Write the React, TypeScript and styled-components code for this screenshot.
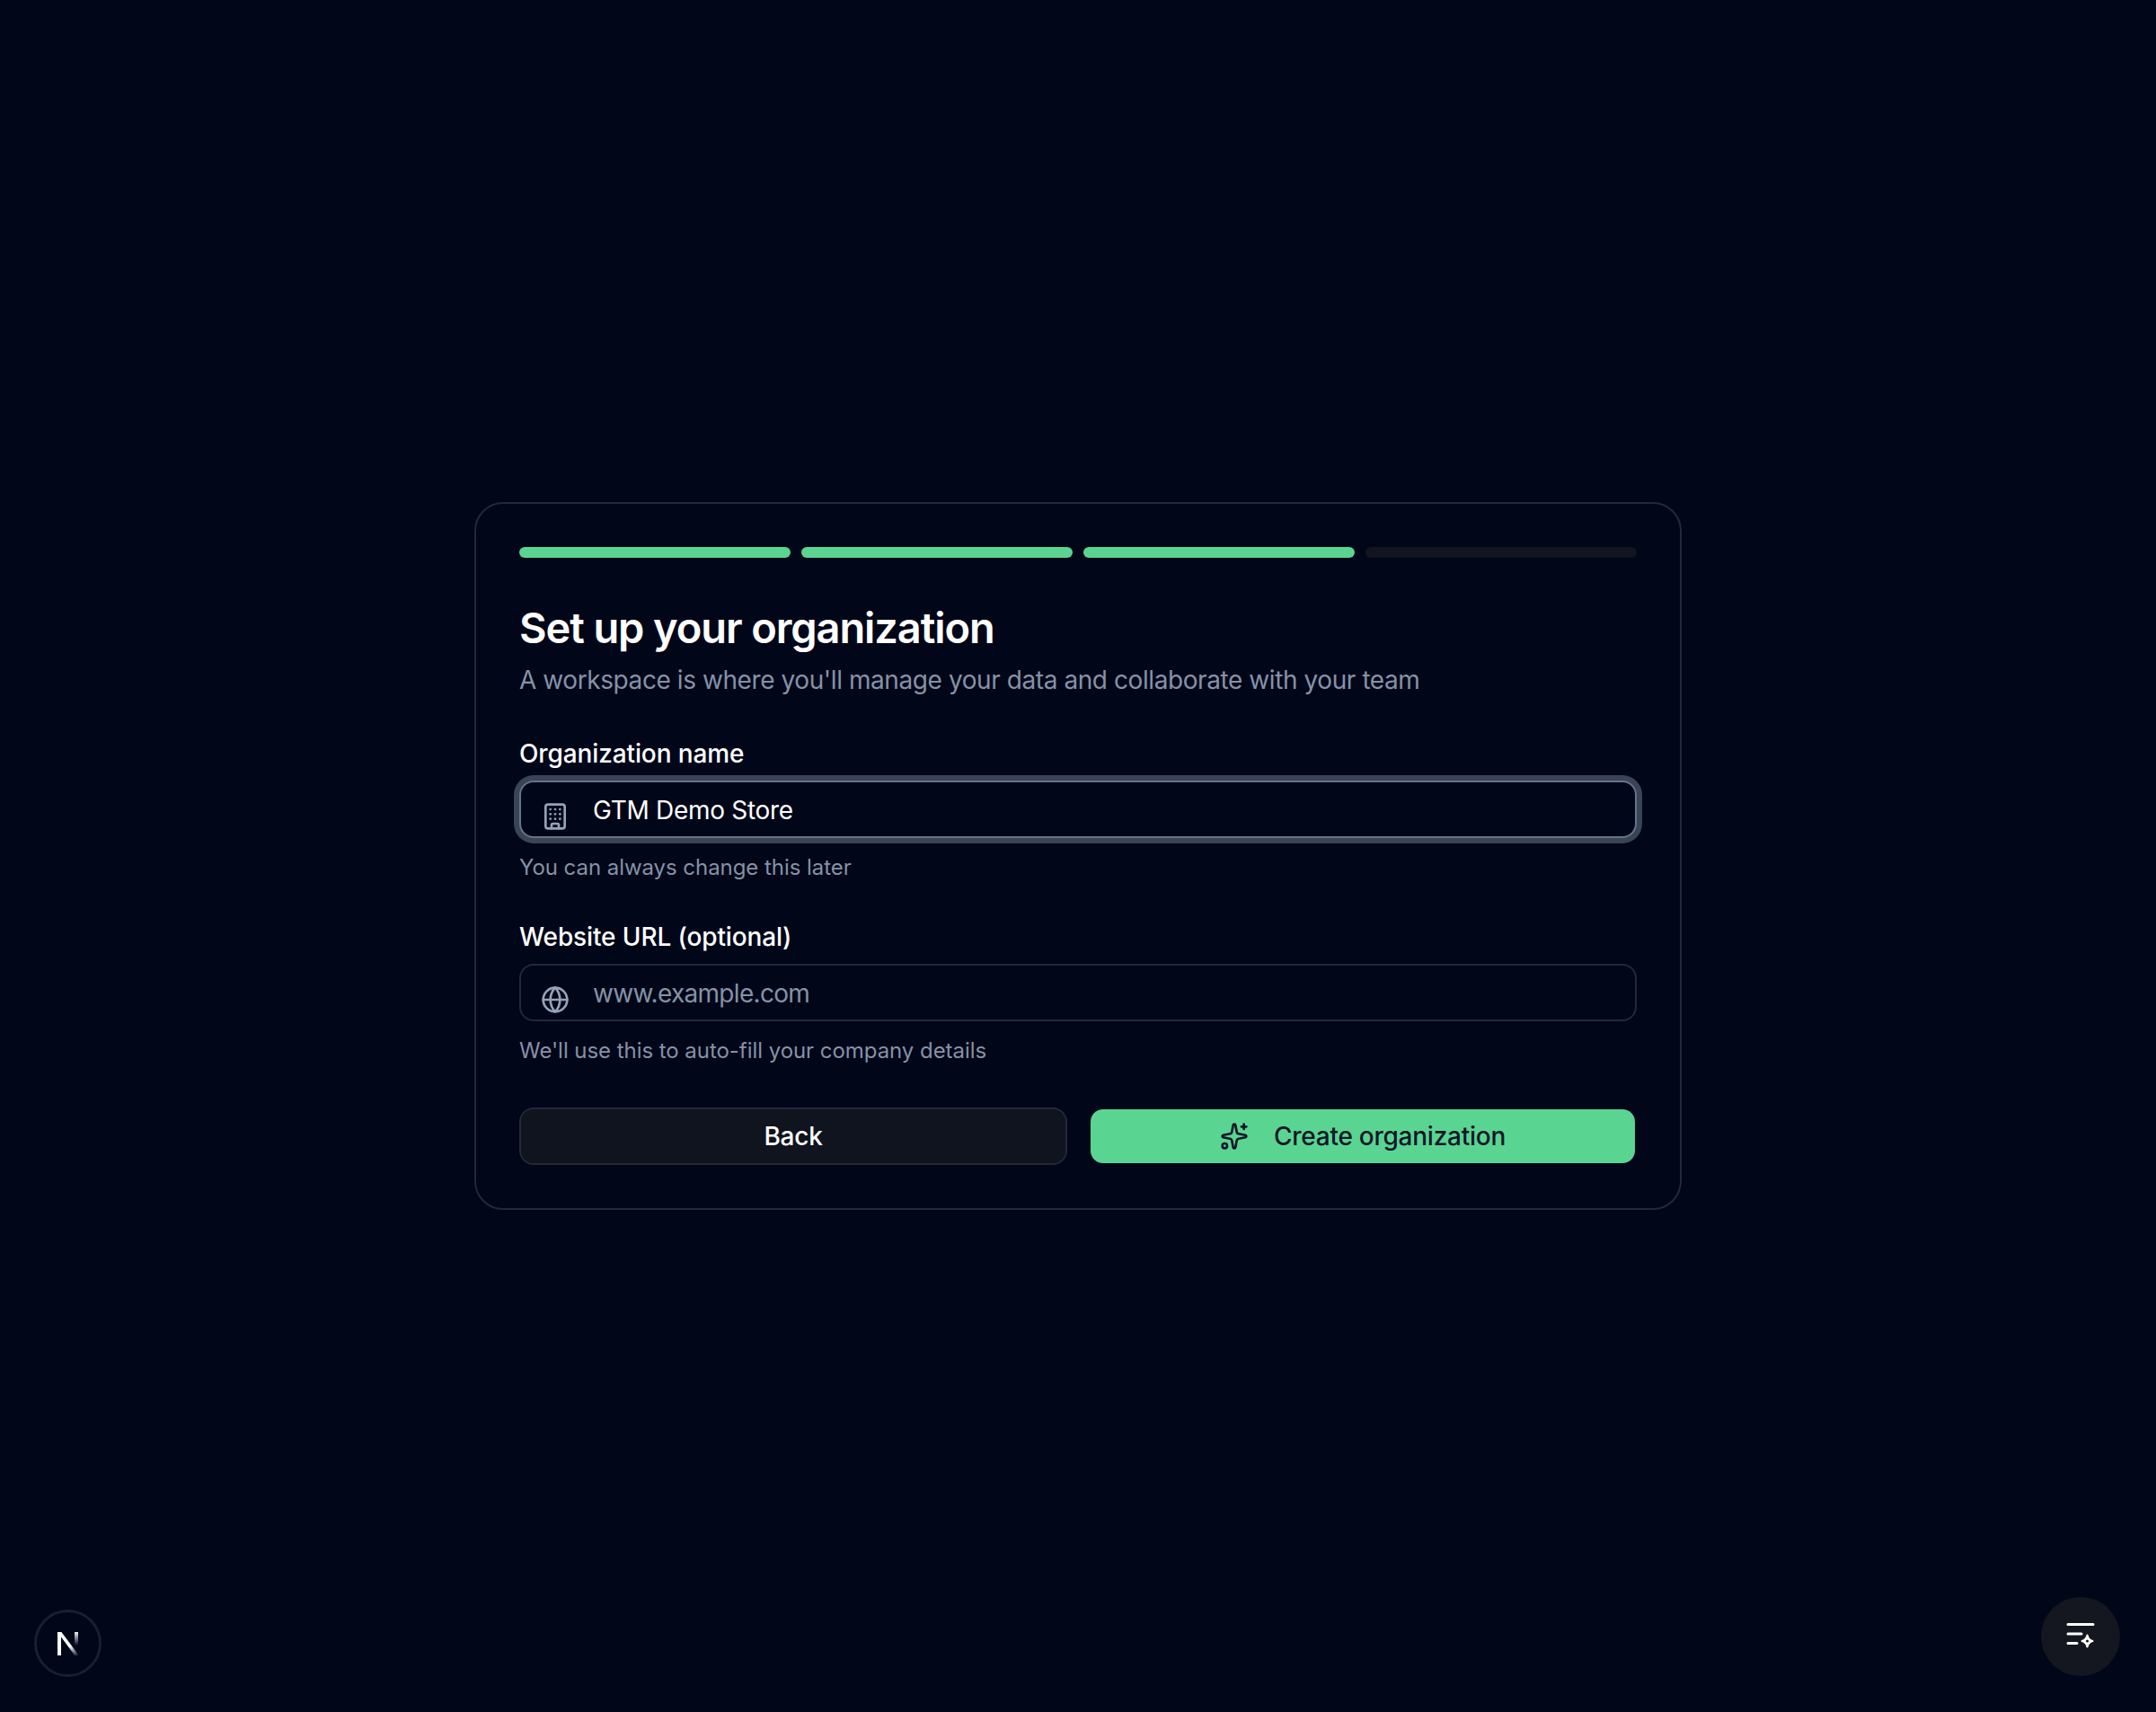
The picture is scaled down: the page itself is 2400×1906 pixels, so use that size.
// App.tsx
import React from 'react';
import styled, { createGlobalStyle } from 'styled-components';
import { Building, Globe, Sparkles } from 'lucide-react';

const GlobalStyle = createGlobalStyle`
  html, body {
    margin: 0;
    padding: 0;
    background: #010619;
    font-family: Inter, "Liberation Sans", sans-serif;
  }
  * { box-sizing: border-box; }
`;

const Page = styled.main`
  min-height: 100vh;
  display: flex;
  align-items: center;
  justify-content: center;
  background: #010619;
`;

const Card = styled.section`
  width: 1344px;
  padding: 48px;
  border: 2px solid #242839;
  border-radius: 32px;
  background: #010619;
`;

const Progress = styled.div`
  display: grid;
  grid-template-columns: repeat(4, 1fr);
  gap: 12px;
  margin-bottom: 48px;
`;

const ProgressBar = styled.div<{ $done?: boolean }>`
  height: 12px;
  border-radius: 6px;
  background: ${(p) => (p.$done ? '#5ad591' : '#12151f')};
`;

const Title = styled.h1`
  margin: 0;
  color: #ffffff;
  font-size: 47px;
  line-height: 59px;
  font-weight: 600;
  letter-spacing: -1.1px;
`;

const Subtitle = styled.p`
  margin: 9px 0 42px;
  color: #8592a6;
  font-size: 28px;
  line-height: 40px;
  letter-spacing: -0.42px;
`;

const Field = styled.div<{ $gap: number }>`
  margin-bottom: ${(p) => p.$gap}px;
`;

const Label = styled.label`
  display: block;
  margin-bottom: 10px;
  color: #ffffff;
  font-size: 28px;
  line-height: 40px;
  font-weight: 500;
  letter-spacing: -0.12px;
`;

const InputWrap = styled.div`
  position: relative;
  color: #94a3b8;
`;

const IconSlot = styled.span`
  position: absolute;
  left: 24px;
  top: 24px;
  display: flex;
`;

const TextInput = styled.input<{ $focused?: boolean }>`
  display: block;
  width: 100%;
  height: 64px;
  padding: 2px 24px 0 80px;
  border: 2px solid ${(p) => (p.$focused ? '#64748b' : '#242839')};
  border-radius: 16px;
  outline: none;
  background: #010619;
  color: #ffffff;
  font-family: inherit;
  font-size: 28px;
  letter-spacing: -0.3px;
  box-shadow: ${(p) => (p.$focused ? '0 0 0 6px #394455' : 'none')};

  &::placeholder {
    color: #8592a6;
    opacity: 1;
    letter-spacing: -0.7px;
  }
`;

const Hint = styled.p`
  margin: 15px 0 0;
  color: #8592a6;
  font-size: 24px;
  line-height: 36px;
  letter-spacing: -0.05px;
`;

const Actions = styled.div`
  display: grid;
  grid-template-columns: 1fr 1fr;
  gap: 24px;
`;

const Button = styled.button<{ $primary?: boolean }>`
  display: flex;
  align-items: center;
  justify-content: center;
  gap: 28px;
  height: 64px;
  border: 2px solid ${(p) => (p.$primary ? 'transparent' : '#242839')};
  border-radius: 16px;
  background: ${(p) => (p.$primary ? '#5ad591' : '#10141f')};
  background-clip: padding-box;
  color: ${(p) => (p.$primary ? '#0f172a' : '#ffffff')};
  font-family: inherit;
  font-size: 28px;
  font-weight: 500;
  letter-spacing: -0.25px;
`;

const DevBadge = styled.div`
  position: fixed;
  left: 38px;
  bottom: 39px;
  width: 75px;
  height: 75px;
  display: flex;
  align-items: center;
  justify-content: center;
  border: 3px solid #1b1f2c;
  border-radius: 50%;
  background: #010619;
`;

const AssistantButton = styled.button`
  position: fixed;
  right: 40px;
  bottom: 40px;
  width: 88px;
  height: 88px;
  display: flex;
  align-items: center;
  justify-content: center;
  padding: 0;
  border: none;
  border-radius: 50%;
  background: #14171f;
`;

function NextMark() {
  return (
    <svg width="26" height="28" viewBox="0 0 26 28" fill="none">
      <defs>
        <linearGradient id="nDiagonal" x1="10" y1="6" x2="24" y2="28" gradientUnits="userSpaceOnUse">
          <stop offset="0.45" stopColor="#fff" />
          <stop offset="1" stopColor="#fff" stopOpacity="0" />
        </linearGradient>
        <linearGradient id="nStem" x1="22" y1="0" x2="22" y2="16" gradientUnits="userSpaceOnUse">
          <stop offset="0" stopColor="#fff" />
          <stop offset="1" stopColor="#fff" stopOpacity="0" />
        </linearGradient>
      </defs>
      <path d="M1 1h4v26H1z" fill="#fff" />
      <path d="M1 1h4.4L25 27.2h-4.6z" fill="url(#nDiagonal)" />
      <path d="M20 1h4v16h-4z" fill="url(#nStem)" />
    </svg>
  );
}

function ListSparkle() {
  return (
    <svg width="32" height="32" viewBox="0 0 32 32" fill="none">
      <path d="M2 2.500h28M2 13h15M2 23.500h10" stroke="#fff" strokeWidth="3" strokeLinecap="round" />
      <path
        d="M23.500 14.500c.8 3.800 2.500 5.600 6 6.500-3.500.9-5.200 2.700-6 6.500-.8-3.800-2.500-5.600-6-6.500 3.500-.9 5.200-2.700 6-6.500z"
        fill="#fff"
        stroke="#fff"
        strokeWidth="2"
        strokeLinejoin="round"
      />
      <circle cx="23.500" cy="21" r="1.500" fill="#14171f" />
    </svg>
  );
}

export default function App() {
  return (
    <>
      <GlobalStyle />
      <Page>
        <Card>
          <Progress>
            <ProgressBar $done />
            <ProgressBar $done />
            <ProgressBar $done />
            <ProgressBar />
          </Progress>

          <Title>Set up your organization</Title>
          <Subtitle>A workspace is where you'll manage your data and collaborate with your team</Subtitle>

          <Field $gap={39}>
            <Label>Organization name</Label>
            <InputWrap>
              <IconSlot>
                <Building size={32} />
              </IconSlot>
              <TextInput $focused readOnly value="GTM Demo Store" />
            </InputWrap>
            <Hint>You can always change this later</Hint>
          </Field>

          <Field $gap={45}>
            <Label>Website URL (optional)</Label>
            <InputWrap>
              <IconSlot>
                <Globe size={32} />
              </IconSlot>
              <TextInput readOnly placeholder="www.example.com" />
            </InputWrap>
            <Hint>We'll use this to auto-fill your company details</Hint>
          </Field>

          <Actions>
            <Button>Back</Button>
            <Button $primary>
              <Sparkles size={32} />
              Create organization
            </Button>
          </Actions>
        </Card>
      </Page>

      <DevBadge>
        <NextMark />
      </DevBadge>
      <AssistantButton>
        <ListSparkle />
      </AssistantButton>
    </>
  );
}
